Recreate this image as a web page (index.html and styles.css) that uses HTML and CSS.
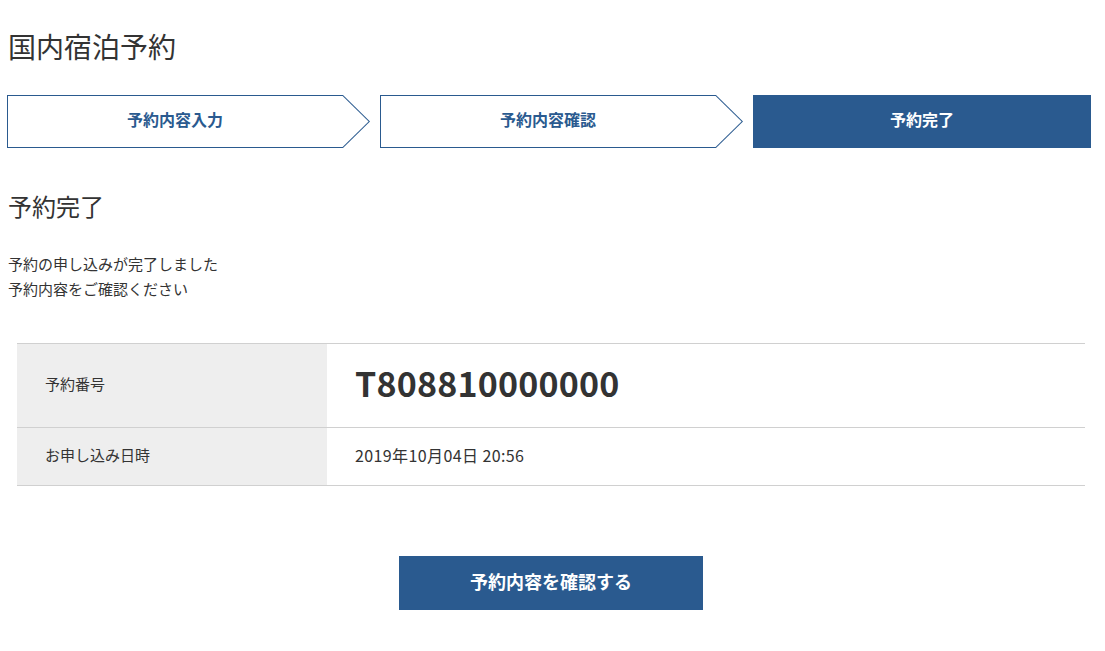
FILE: index.html
```html
<!DOCTYPE html>
<html lang="ja">
<head>
<meta charset="utf-8">
<title>国内宿泊予約</title>
<link rel="stylesheet" href="styles.css">
</head>
<body>
<main class="page">
  <h1 class="page-title">国内宿泊予約</h1>
  <ol class="steps">
    <li class="step step-arrow"><span class="step-inner"><span class="step-label">予約内容入力</span></span></li>
    <li class="step step-arrow"><span class="step-inner"><span class="step-label">予約内容確認</span></span></li>
    <li class="step step-current"><span class="step-label">予約完了</span></li>
  </ol>
  <h2 class="section-title">予約完了</h2>
  <p class="lead">予約の申し込みが完了しました<br>予約内容をご確認ください</p>
  <table class="summary">
    <tr class="row-number">
      <th>予約番号</th>
      <td class="reservation-no">T808810000000</td>
    </tr>
    <tr class="row-date">
      <th>お申し込み日時</th>
      <td class="date">2019年10月04日 20:56</td>
    </tr>
  </table>
  <div class="actions">
    <button class="btn-primary" type="button">予約内容を確認する</button>
  </div>
</main>
</body>
</html>
```

FILE: styles.css
```css
* { box-sizing: border-box; }
html, body { margin: 0; padding: 0; background: #fff; }
body {
  font-family: "Noto Sans CJK JP", "Noto Sans", sans-serif;
  color: #333;
}
.page {
  width: 1084px;
  margin-left: 7px;
  padding-top: 26px;
  padding-bottom: 40px;
}
.page-title {
  margin: 0 0 0 1px;
  font-size: 28px;
  line-height: 40px;
  font-weight: 400;
  color: #333;
}
.steps {
  list-style: none;
  margin: 29px 0 0;
  padding: 0;
  display: grid;
  grid-template-columns: 363px 363px 1fr;
  column-gap: 10px;
  height: 53px;
}
.step {
  height: 53px;
  font-size: 16px;
  font-weight: 700;
  line-height: 1;
}
.step-arrow {
  background: #2a5a8f;
  clip-path: polygon(0 0, 336px 0, 363px 50%, 336px 100%, 0 100%);
  padding: 1px;
  color: #2a5a8f;
}
.step-inner {
  display: flex;
  width: 100%;
  height: 100%;
  background: #fff;
  clip-path: polygon(0 0, 334.6px 0, 360.6px 50%, 334.6px 100%, 0 100%);
  align-items: center;
  padding-right: 27px;
  padding-bottom: 5px;
}
.step-label {
  flex: 1;
  text-align: center;
}
.step-current {
  display: flex;
  align-items: center;
  padding-bottom: 5px;
  background: #2a5a8f;
  color: #fff;
}
.section-title {
  margin: 42px 0 0 1px;
  font-size: 24px;
  line-height: 32px;
  font-weight: 400;
}
.lead {
  margin: 29px 0 0 1px;
  font-size: 15px;
  line-height: 25px;
}
.summary {
  margin: 42px 0 0 10px;
  width: 1068px;
  border-collapse: collapse;
  border-top: 1px solid #d0d0d0;
}
.summary tr { border-bottom: 1px solid #d0d0d0; }
.summary th {
  width: 310px;
  background: #eeeeee;
  text-align: left;
  font-weight: 400;
  font-size: 15px;
  padding: 0 28px 4px;
}
.summary td {
  padding: 0 28px 4px;
  font-size: 15px;
}
.row-number { height: 84px; }
.row-date { height: 58px; }
.summary td.reservation-no {
  font-size: 34px;
  font-weight: 700;
  letter-spacing: 0.2px;
  padding-bottom: 7px;
}
.summary td.date {
  font-size: 16px;
  letter-spacing: 0.4px;
}
.actions {
  display: flex;
  justify-content: center;
  margin-top: 70px;
  padding-left: 4px;
}
.btn-primary {
  width: 304px;
  height: 54px;
  border: 0;
  padding: 0 0 5px;
  background: #2a5a8f;
  color: #fff;
  font-family: inherit;
  font-size: 18px;
  font-weight: 700;
  cursor: pointer;
}
```
